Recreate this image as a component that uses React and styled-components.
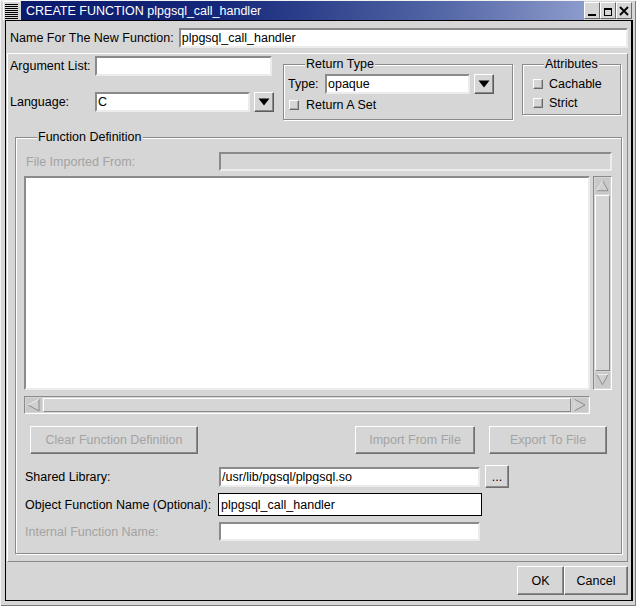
import React from 'react';
import styled, { createGlobalStyle, css } from 'styled-components';

const FACE = '#d6d6d6';
const SHADOW = '#8a8a8a';
const DISABLED = '#a3a3a3';

const GlobalStyle = createGlobalStyle`
  html, body {
    margin: 0;
    padding: 0;
    background: ${FACE};
  }
  body {
    font-family: "Liberation Sans", Arial, Helvetica, sans-serif;
    font-size: 12.5px;
    color: #000;
  }
  * {
    box-sizing: border-box;
  }
`;

const Window = styled.div`
    width: 636px;
    height: 606px;
    display: flex;
    flex-direction: column;
    padding: 1px 3px 5px 3px;
    background: ${FACE};
    box-shadow: inset 1px 1px 0 #f2f2f2, inset -1px -1px 0 #7a7a7a;
`;

const TitleBar = styled.div`
    height: 19px;
    display: flex;
    flex: none;
`;

const MenuIcon = styled.div`
    width: 17px;
    flex: none;
    display: flex;
    border-top: 1px solid #fff;
    border-left: 1px solid #fff;
    background: ${FACE};
`;

const Caption = styled.div`
    flex: 1;
    margin-left: 1px;
    padding-left: 5px;
    display: flex;
    align-items: center;
    color: #fff;
    font-size: 12.5px;
    background: linear-gradient(to right, #0a1a6c 0%, #15277a 35%, #5467a6 75%, #8c9bcc 100%);
`;

const TitleButtons = styled.div`
    display: flex;
    padding: 1px 1px 1px 0;
    background: ${FACE};
`;

const TitleButton = styled.div`
    width: 16px;
    height: 17px;
    display: flex;
    align-items: center;
    justify-content: center;
    border: 1px solid;
    border-color: #fff #6a6a6a #6a6a6a #fff;
    background: ${FACE};
`;

const Client = styled.div`
    flex: 1;
    display: flex;
    flex-direction: column;
    margin-left: 2px;
    border: 1px solid #000;
    border-right-width: 2px;
`;

const NameRow = styled.div`
    height: 32px;
    flex: none;
    display: flex;
    align-items: center;
    padding: 7px 3px 5px 4px;
    gap: 5px;
`;

const Label = styled.span`
    flex: none;
    width: ${p => (p.$w ? `${p.$w}px` : 'auto')};
    padding-left: ${p => p.$pad || 0}px;
    color: ${p => (p.$disabled ? DISABLED : '#000')};
    white-space: nowrap;
`;

const Field = styled.input`
    font: inherit;
    font-size: 12.5px;
    color: #000;
    height: ${p => p.$h || 20}px;
    width: ${p => (p.$w ? `${p.$w}px` : 'auto')};
    flex: ${p => (p.$w ? 'none' : '1')};
    min-width: 0;
    margin: 0;
    padding: 0 1px;
    outline: none;
    background: ${p => (p.disabled ? FACE : '#fff')};
    border: 2px solid;
    border-color: ${SHADOW} #ececec #ececec ${SHADOW};
    ${p => p.$focus && css`
        border: 1px solid #000;
        padding: 0 2px;
    `}
`;

const Panel = styled.div`
    flex: 1;
    display: flex;
    flex-direction: column;
    margin: 0 3px 0 1px;
    border: 1px solid;
    border-color: #fff ${SHADOW} ${SHADOW} #fff;
`;

const TopRow = styled.div`
    height: 83px;
    flex: none;
    display: flex;
    align-items: flex-start;
`;

const LeftFields = styled.div`
    width: 264px;
    flex: none;
    display: flex;
    flex-direction: column;
    gap: 16px;
    padding: 2px 0 0 2px;
`;

const FieldRow = styled.div`
    display: flex;
    align-items: center;
`;

const GroupBox = styled.div`
    position: relative;
    flex: none;
    width: ${p => p.$w}px;
    height: ${p => p.$h}px;
    margin: 10px 0 0 ${p => p.$ml}px;
    padding: ${p => p.$pad};
    display: flex;
    flex-direction: column;
    border: 1px solid ${SHADOW};
    box-shadow: inset 1px 1px 0 #fff, 1px 1px 0 #fff;
`;

const GroupTitle = styled.span`
    position: absolute;
    top: -8px;
    left: 21px;
    padding: 0 1px;
    line-height: 15px;
    background: ${FACE};
    white-space: nowrap;
`;

const DropButton = styled.div`
    width: 20px;
    height: 20px;
    flex: none;
    margin-left: 4px;
    display: flex;
    align-items: center;
    justify-content: center;
    background: ${FACE};
    border: 1px solid;
    border-color: #fff #5a5a5a #5a5a5a #fff;
    box-shadow: inset -1px -1px 0 ${SHADOW};
`;

const CheckRow = styled.label`
    display: flex;
    align-items: center;
    gap: ${p => p.$gap || 7}px;
    height: 10px;
    margin: ${p => p.$m || 0};
`;

const CheckBox = styled.span`
    width: 10px;
    height: 10px;
    flex: none;
    background: ${FACE};
    border: 1px solid;
    border-color: #fff #6a6a6a #6a6a6a #fff;
    box-shadow: inset -1px -1px 0 #a8a8a8;
`;

const DefinitionBox = styled(GroupBox)`
    flex: 1;
    height: auto;
    width: auto;
    margin: 0 5px 7px 7px;
`;

const Editor = styled.div`
    display: grid;
    grid-template-columns: 1fr 19px;
    grid-template-rows: 214px 18px;
    column-gap: 3px;
    row-gap: 6px;
    margin-top: 5px;
`;

const TextArea = styled.div`
    background: #fff;
    border: 2px solid;
    border-color: ${SHADOW} #ececec #ececec ${SHADOW};
`;

const ScrollBar = styled.div`
    display: flex;
    flex-direction: ${p => (p.$vertical ? 'column' : 'row')};
    padding: 1px;
    background: ${FACE};
    border: 1px solid;
    border-color: ${SHADOW} #fff #fff ${SHADOW};
`;

const ScrollArrow = styled.div`
    flex: none;
    width: ${p => (p.$vertical ? '100%' : '16px')};
    height: ${p => (p.$vertical ? '16px' : '100%')};
    display: flex;
    align-items: center;
    justify-content: center;
    background: #c9c9c9;
`;

const Thumb = styled.div`
    flex: 1;
    border: 1px solid;
    border-color: #fff ${SHADOW} ${SHADOW} #fff;
    margin: ${p => (p.$vertical ? '1px 0' : '0 1px')};
`;

const Button = styled.button`
    font: inherit;
    font-size: 12.5px;
    width: ${p => p.$w}px;
    height: ${p => p.$h || 28}px;
    flex: none;
    padding: 0;
    margin: 0;
    color: #000;
    background: ${FACE};
    border: 1px solid;
    border-color: #fff #6f6f6f #6f6f6f #fff;
    box-shadow: inset -1px -1px 0 ${SHADOW};
    &:disabled {
        color: ${DISABLED};
    }
`;

const ActionRow = styled.div`
    display: flex;
    align-items: center;
    gap: 14px;
    margin-top: 12px;
    padding: 0 5px 0 6px;
    > :first-child {
        margin-right: auto;
    }
`;

const FormRow = styled.div`
    display: flex;
    align-items: center;
    height: ${p => p.$h || 23}px;
    margin-top: ${p => p.$mt || 0}px;
`;

const ButtonBar = styled.div`
    height: 38px;
    flex: none;
    display: flex;
    justify-content: flex-end;
    align-items: flex-start;
    padding: 4px 3px 0 0;
`;

const DownTriangle = () => (
    <svg width="12" height="8" viewBox="0 0 12 8">
        <polygon points="0.5,0.5 11.5,0.5 6,7.5" fill="#000" />
    </svg>
);

const Arrow = ({ dir }) => {
    const shapes = {
        up: { pts: '8,2 2,13 14,13', light: 'M2 13 L8 2' },
        down: { pts: '2,2 14,2 8,13', light: 'M2 2 L14 2' },
        left: { pts: '2,8 13,2 13,14', light: 'M2 8 L13 2' },
        right: { pts: '2,2 2,14 13,8', light: 'M2 2 L2 14' },
    };
    const s = shapes[dir];
    return (
        <svg width="16" height="16" viewBox="0 0 16 16">
            <polygon points={s.pts} fill="#d0d0d0" stroke="#8a8a8a" strokeWidth="1" />
            <path d={s.light} stroke="#fff" strokeWidth="1" fill="none" />
        </svg>
    );
};

const App = () => (
    <>
        <GlobalStyle />
        <Window>
            <TitleBar>
                <MenuIcon>
                    <svg width="16" height="18" viewBox="0 0 16 18">
                        {[2, 4, 6, 8, 10, 12, 14, 16].map(y => (
                            <rect key={y} x="1" y={y} width="13" height="1" fill="#000" />
                        ))}
                    </svg>
                </MenuIcon>
                <Caption>CREATE FUNCTION plpgsql_call_handler</Caption>
                <TitleButtons>
                    <TitleButton>
                        <svg width="12" height="12" viewBox="0 0 12 12">
                            <rect x="2" y="9" width="8" height="2" fill="#000" />
                        </svg>
                    </TitleButton>
                    <TitleButton>
                        <svg width="12" height="12" viewBox="0 0 12 12">
                            <rect x="2.5" y="3.5" width="7" height="7" fill="none" stroke="#000" />
                            <rect x="2" y="3" width="8" height="2" fill="#000" />
                        </svg>
                    </TitleButton>
                    <TitleButton>
                        <svg width="12" height="12" viewBox="0 0 12 12">
                            <path d="M2 2 L10 10 M10 2 L2 10" stroke="#000" strokeWidth="1.8" />
                        </svg>
                    </TitleButton>
                </TitleButtons>
            </TitleBar>

            <Client>
                <NameRow>
                    <Label>Name For The New Function:</Label>
                    <Field value="plpgsql_call_handler" readOnly />
                </NameRow>

                <Panel>
                    <TopRow>
                        <LeftFields>
                            <FieldRow>
                                <Label $w={85}>Argument List:</Label>
                                <Field $w={177} readOnly />
                            </FieldRow>
                            <FieldRow>
                                <Label $w={85}>Language:</Label>
                                <Field $w={155} value="C" readOnly />
                                <DropButton><DownTriangle /></DropButton>
                            </FieldRow>
                        </LeftFields>

                        <GroupBox $w={230} $h={56} $ml={11} $pad="9px 4px 0 4px">
                            <GroupTitle>Return Type</GroupTitle>
                            <FieldRow>
                                <Label $w={37}>Type:</Label>
                                <Field $w={145} value="opaque" readOnly />
                                <DropButton><DownTriangle /></DropButton>
                            </FieldRow>
                            <CheckRow $m="6px 0 0 1px">
                                <CheckBox />
                                <span>Return A Set</span>
                            </CheckRow>
                        </GroupBox>

                        <GroupBox $w={99} $h={51} $ml={9} $pad="14px 0 0 10px">
                            <GroupTitle>Attributes</GroupTitle>
                            <CheckRow $gap={6}>
                                <CheckBox />
                                <span>Cachable</span>
                            </CheckRow>
                            <CheckRow $gap={6} $m="9px 0 0 0">
                                <CheckBox />
                                <span>Strict</span>
                            </CheckRow>
                        </GroupBox>
                    </TopRow>

                    <DefinitionBox $pad="14px 9px 12px 8px">
                        <GroupTitle>Function Definition</GroupTitle>
                        <FormRow $h={19}>
                            <Label $w={195} $pad={2} $disabled>File Imported From:</Label>
                            <Field $h={19} disabled />
                        </FormRow>

                        <Editor>
                            <TextArea />
                            <ScrollBar $vertical>
                                <ScrollArrow $vertical><Arrow dir="up" /></ScrollArrow>
                                <Thumb $vertical />
                                <ScrollArrow $vertical><Arrow dir="down" /></ScrollArrow>
                            </ScrollBar>
                            <ScrollBar>
                                <ScrollArrow><Arrow dir="left" /></ScrollArrow>
                                <Thumb />
                                <ScrollArrow><Arrow dir="right" /></ScrollArrow>
                            </ScrollBar>
                        </Editor>

                        <ActionRow>
                            <Button $w={168} disabled>Clear Function Definition</Button>
                            <Button $w={120} disabled>Import From File</Button>
                            <Button $w={118} disabled>Export To File</Button>
                        </ActionRow>

                        <FormRow $mt={11}>
                            <Label $w={195} $pad={1}>Shared Library:</Label>
                            <Field $w={261} value="/usr/lib/pgsql/plpgsql.so" readOnly />
                            <Button $w={24} $h={23} style={{ marginLeft: 5 }}>...</Button>
                        </FormRow>
                        <FormRow $mt={5}>
                            <Label $w={194} $pad={1}>Object Function Name (Optional):</Label>
                            <Field $w={264} $h={23} $focus value="plpgsql_call_handler" readOnly />
                        </FormRow>
                        <FormRow $mt={6} $h={19}>
                            <Label $w={195} $pad={1} $disabled>Internal Function Name:</Label>
                            <Field $w={261} $h={19} readOnly />
                        </FormRow>
                    </DefinitionBox>
                </Panel>

                <ButtonBar>
                    <Button $w={47} $h={29}>OK</Button>
                    <Button $w={64} $h={29}>Cancel</Button>
                </ButtonBar>
            </Client>
        </Window>
    </>
);

export default App;
